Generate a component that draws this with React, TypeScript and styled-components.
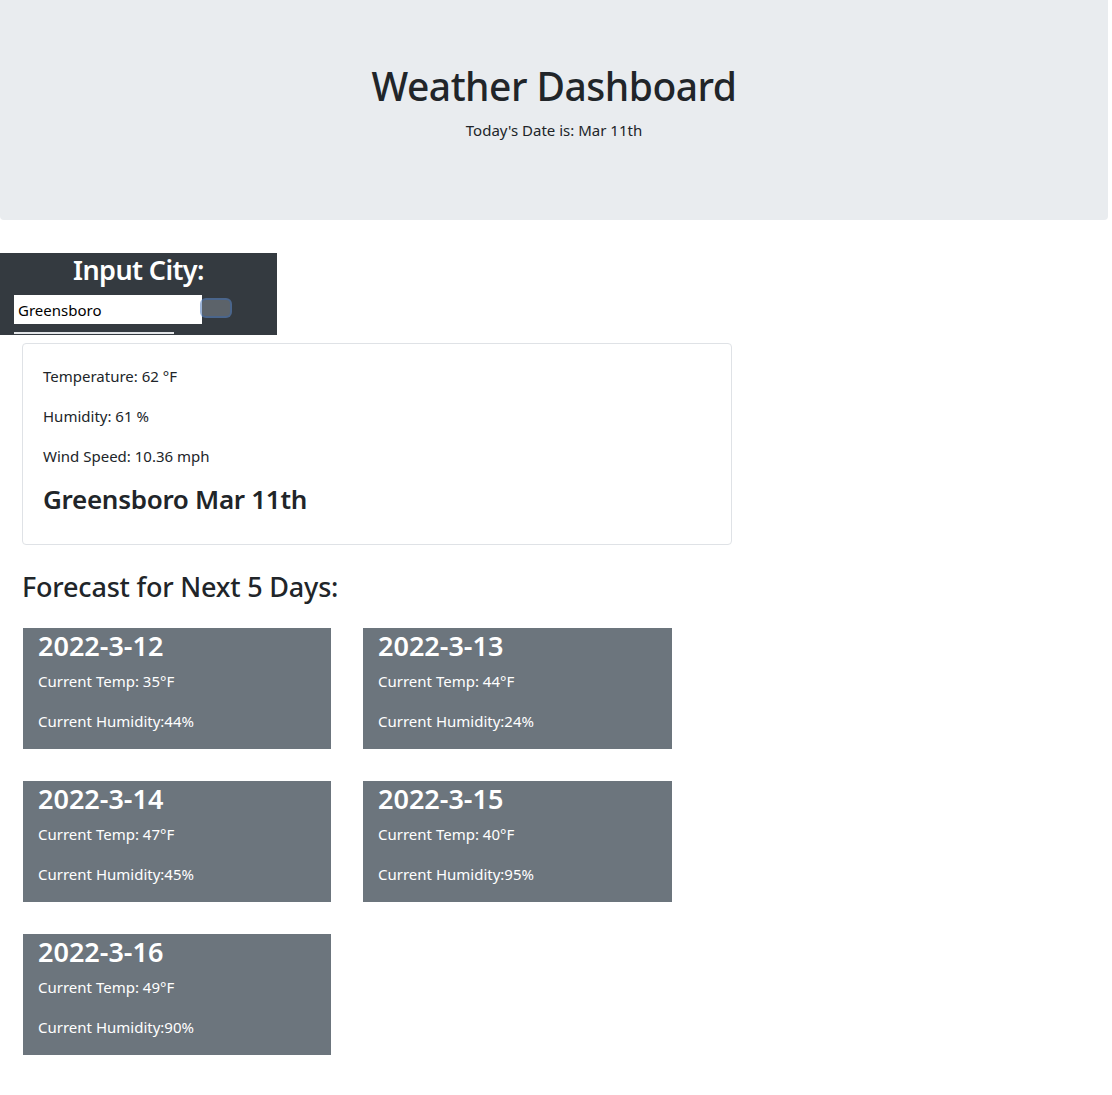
import styled, { createGlobalStyle } from 'styled-components';

const forecast = [
  { date: '2022-3-12', temp: 35, humidity: 44 },
  { date: '2022-3-13', temp: 44, humidity: 24 },
  { date: '2022-3-14', temp: 47, humidity: 45 },
  { date: '2022-3-15', temp: 40, humidity: 95 },
  { date: '2022-3-16', temp: 49, humidity: 90 },
];

function App() {
  return (
    <>
      <GlobalStyle />
      <Jumbotron>
        <Title>Weather Dashboard</Title>
        <Lead>Today's Date is: Mar 11th</Lead>
      </Jumbotron>

      <SearchPanel>
        <PanelTitle>Input City:</PanelTitle>
        <SearchRow>
          <CityInput defaultValue="Greensboro" />
          <SearchButton type="button" aria-label="search" />
        </SearchRow>
        <HistoryStrip />
      </SearchPanel>

      <CurrentCard>
        <Text>Temperature: 62 °F</Text>
        <Text>Humidity: 61 %</Text>
        <Text>Wind Speed: 10.36 mph</Text>
        <Heading>Greensboro Mar 11th</Heading>
      </CurrentCard>

      <ForecastTitle>Forecast for Next 5 Days:</ForecastTitle>
      <ForecastGrid>
        {forecast.map((day) => (
          <DayCard key={day.date}>
            <DayHeading>{day.date}</DayHeading>
            <Text>Current Temp: {day.temp}°F</Text>
            <Text>Current Humidity:{day.humidity}%</Text>
          </DayCard>
        ))}
      </ForecastGrid>
    </>
  );
}

export default App;

const GlobalStyle = createGlobalStyle`
  body {
    margin: 0;
    font-family: 'Noto Sans', 'Open Sans', sans-serif;
    font-size: 15px;
    line-height: 24px;
    color: #212529;
    background: #fff;
  }
  * {
    box-sizing: border-box;
  }
`;

const Jumbotron = styled.header`
  width: 1108px;
  height: 220px;
  padding-top: 63px;
  background: #e9ecef;
  border-radius: 0 0 4px 4px;
  text-align: center;
`;

const Title = styled.h1`
  margin: 0 0 8px;
  font-size: 39px;
  font-weight: 500;
  line-height: 1.2;
  letter-spacing: -0.5px;
`;

const Lead = styled.p`
  margin: 0;
  font-size: 15px;
`;

const SearchPanel = styled.section`
  width: 277px;
  height: 82px;
  margin-top: 33px;
  padding-top: 1px;
  background: #343a40;
`;

const PanelTitle = styled.h3`
  margin: 0 0 9px;
  color: #fff;
  font-size: 27px;
  font-weight: 600;
  line-height: 1.2;
  letter-spacing: -0.6px;
  text-align: center;
`;

const SearchRow = styled.div`
  display: flex;
  align-items: flex-start;
  padding-left: 14px;
`;

const CityInput = styled.input`
  width: 188px;
  height: 29px;
  padding: 0 4px;
  border: none;
  font-family: 'Noto Sans', sans-serif;
  font-size: 15px;
  color: #000;
  outline: none;
`;

const SearchButton = styled.button`
  width: 28px;
  height: 16px;
  margin-top: 5px;
  border: none;
  border-radius: 4px;
  background: #5c636a;
  box-shadow: 0 0 0 2px rgba(90, 130, 190, 0.6);
`;

const HistoryStrip = styled.div`
  width: 160px;
  height: 2px;
  margin: 8px 0 0 14px;
  background: #e4e6e9;
`;

const CurrentCard = styled.section`
  width: 710px;
  margin: 8px 0 0 22px;
  padding: 20px;
  border: 1px solid #dfe2e6;
  border-radius: 4px;
`;

const Text = styled.p`
  margin: 0 0 16px;
  font-size: 15px;
  line-height: 24px;
`;

const Heading = styled.h3`
  margin: 4px 0 9px;
  font-size: 26px;
  font-weight: 600;
  line-height: 1.2;
  letter-spacing: -0.3px;
`;

const ForecastTitle = styled.h3`
  margin: 26px 0 24px 22px;
  font-size: 27px;
  font-weight: 500;
  line-height: 1.2;
  letter-spacing: -0.2px;
`;

const ForecastGrid = styled.div`
  display: grid;
  grid-template-columns: 308px 309px;
  column-gap: 32px;
  row-gap: 32px;
  margin-left: 23px;
  padding-bottom: 40px;
`;

const DayCard = styled.article`
  height: 121px;
  padding: 2px 15px 0;
  background: #6c757d;
  color: #fff;
`;

const DayHeading = styled.h3`
  margin: 0 0 7px;
  font-size: 27px;
  font-weight: 600;
  line-height: 1.2;
`;
